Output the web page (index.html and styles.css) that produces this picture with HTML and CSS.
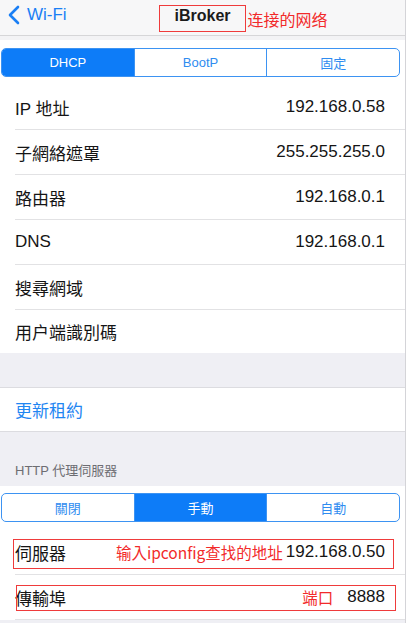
FILE: index.html
```html
<!DOCTYPE html>
<html lang="zh-Hant">
<head>
    <meta charset="UTF-8">
    <meta name="viewport" content="width=device-width, initial-scale=1.0">
    <title>iBroker</title>
    <link rel="stylesheet" href="styles.css">
</head>
<body>
<div class="screen">

    <!-- Navbar -->
    <header class="navbar">
        <a class="back" href="javascript:void(0);">
            <svg width="14" height="20" viewBox="0 0 14 20">
                <path d="M11 2 L3 10 L11 18" fill="none" stroke="#1a7ff5" stroke-width="2.6" stroke-linecap="round" stroke-linejoin="round"/>
            </svg>
            <span>Wi-Fi</span>
        </a>
        <div class="title-box"><span class="title">iBroker</span></div>
        <div class="nav-note">连接的网络</div>
    </header>

    <div class="band-top"></div>

    <!-- IP settings -->
    <section class="group">
        <div class="segment">
            <span class="seg active">DHCP</span>
            <span class="seg">BootP</span>
            <span class="seg">固定</span>
        </div>
        <div class="rows">
            <div class="row"><div class="row-inner"><span class="label">IP 地址</span><span class="value">192.168.0.58</span></div></div>
            <div class="row"><div class="row-inner"><span class="label">子網絡遮罩</span><span class="value">255.255.255.0</span></div></div>
            <div class="row"><div class="row-inner"><span class="label">路由器</span><span class="value">192.168.0.1</span></div></div>
            <div class="row"><div class="row-inner"><span class="label">DNS</span><span class="value">192.168.0.1</span></div></div>
            <div class="row"><div class="row-inner"><span class="label">搜尋網域</span><span class="value"></span></div></div>
            <div class="row last"><div class="row-inner"><span class="label">用户端識別碼</span><span class="value"></span></div></div>
        </div>
    </section>

    <div class="gap"></div>

    <section class="group bordered">
        <div class="row last"><div class="row-inner"><span class="label link">更新租約</span></div></div>
    </section>

    <div class="section-header">HTTP 代理伺服器</div>

    <!-- Proxy -->
    <section class="group proxy">
        <div class="segment">
            <span class="seg">關閉</span>
            <span class="seg active">手動</span>
            <span class="seg">自動</span>
        </div>
        <div class="rows">
            <div class="row">
                <div class="row-inner">
                    <span class="label">伺服器</span>
                    <span class="value-group">
                        <span class="note">输入ipconfig查找的地址</span>
                        <span class="value">192.168.0.50</span>
                    </span>
                </div>
                <div class="mark mark-server"></div>
            </div>
            <div class="row">
                <div class="row-inner">
                    <span class="label">傳輸埠</span>
                    <span class="value-group port">
                        <span class="note">端口</span>
                        <span class="value">8888</span>
                    </span>
                </div>
                <div class="mark mark-port"></div>
            </div>
        </div>
    </section>

</div>
</body>
</html>
```

FILE: styles.css
```css
body {
    margin: 0;
    padding: 0;
    font-family: "Liberation Sans", "Noto Sans CJK TC", sans-serif;
    background-color: #efeff4;
}

.screen {
    width: 406px;
    height: 623px;
    overflow: hidden;
    box-sizing: border-box;
    border-right: 1px solid #d4d4d8;
    background-color: #efeff4;
}

/* Navbar */
.navbar {
    height: 35px;
    background-color: #f7f7f8;
    border-bottom: 1px solid #d6d6d8;
    display: grid;
    grid-template-columns: 1fr auto 1fr;
    align-items: start;
}

.back {
    display: flex;
    align-items: center;
    gap: 6px;
    height: 30px;
    padding-left: 7px;
    color: #1a7ff5;
    text-decoration: none;
    font-size: 17px;
}

.title-box {
    margin-top: 5px;
    height: 27px;
    box-sizing: border-box;
    padding: 0 14px;
    border: 1px solid #ef3b3b;
}

.title {
    display: block;
    line-height: 19px;
    font-size: 16px;
    font-weight: bold;
    color: #1b1b1b;
}

.nav-note {
    margin: 9px 0 0 2px;
    line-height: 20px;
    font-family: "Noto Sans CJK SC", sans-serif;
    font-size: 16px;
    color: #f22a2a;
}

.band-top {
    height: 4px;
    background-color: #f3f3f5;
}

/* Groups */
.group {
    background-color: #fff;
    padding-top: 8px;
}

.group.bordered {
    padding-top: 0;
    border-top: 1px solid #dcdce0;
    border-bottom: 1px solid #dcdce0;
}

.group.proxy {
    padding-top: 7px;
}

.gap {
    height: 34px;
}

.section-header {
    height: 54px;
    box-sizing: border-box;
    padding: 0 0 7px 15px;
    display: flex;
    align-items: flex-end;
    font-size: 13px;
    color: #6d6d72;
}

/* Segmented control */
.segment {
    display: flex;
    height: 29px;
    margin: 0 5px 0 1px;
    box-sizing: border-box;
    border: 1px solid #3d93f2;
    border-radius: 5px;
    overflow: hidden;
}

.seg {
    flex: 1;
    display: flex;
    align-items: center;
    justify-content: center;
    font-size: 13px;
    color: #2f8cf0;
    border-left: 1px solid #3d93f2;
}

.seg:first-child {
    border-left: none;
}

.seg.active {
    background-color: #0d7cf8;
    color: #fff;
}

/* Rows */
.rows {
    margin-top: 8px;
}

.row {
    position: relative;
    padding-left: 15px;
}

.row-inner {
    height: 44px;
    display: flex;
    align-items: center;
    justify-content: space-between;
    padding-right: 20px;
    border-bottom: 1px solid #e2e2e4;
}

.row.last .row-inner {
    height: 43px;
    border-bottom: none;
}

.label {
    font-size: 17px;
    color: #151515;
}

.label.link {
    color: #1f86f2;
}

.value {
    font-size: 17px;
    color: #151515;
}

.value-group {
    display: flex;
    align-items: center;
    gap: 3px;
}

.value-group.port {
    gap: 14px;
}

.note {
    font-family: "Noto Sans CJK SC", sans-serif;
    font-size: 15.5px;
    color: #f22a2a;
}

/* Red annotation boxes */
.mark {
    position: absolute;
    border: 1px solid #ef3b3b;
    box-sizing: border-box;
}

.mark-server {
    left: 13px;
    top: 9px;
    width: 381px;
    height: 30px;
}

.mark-port {
    left: 16px;
    top: 10px;
    width: 380px;
    height: 26px;
}
```
